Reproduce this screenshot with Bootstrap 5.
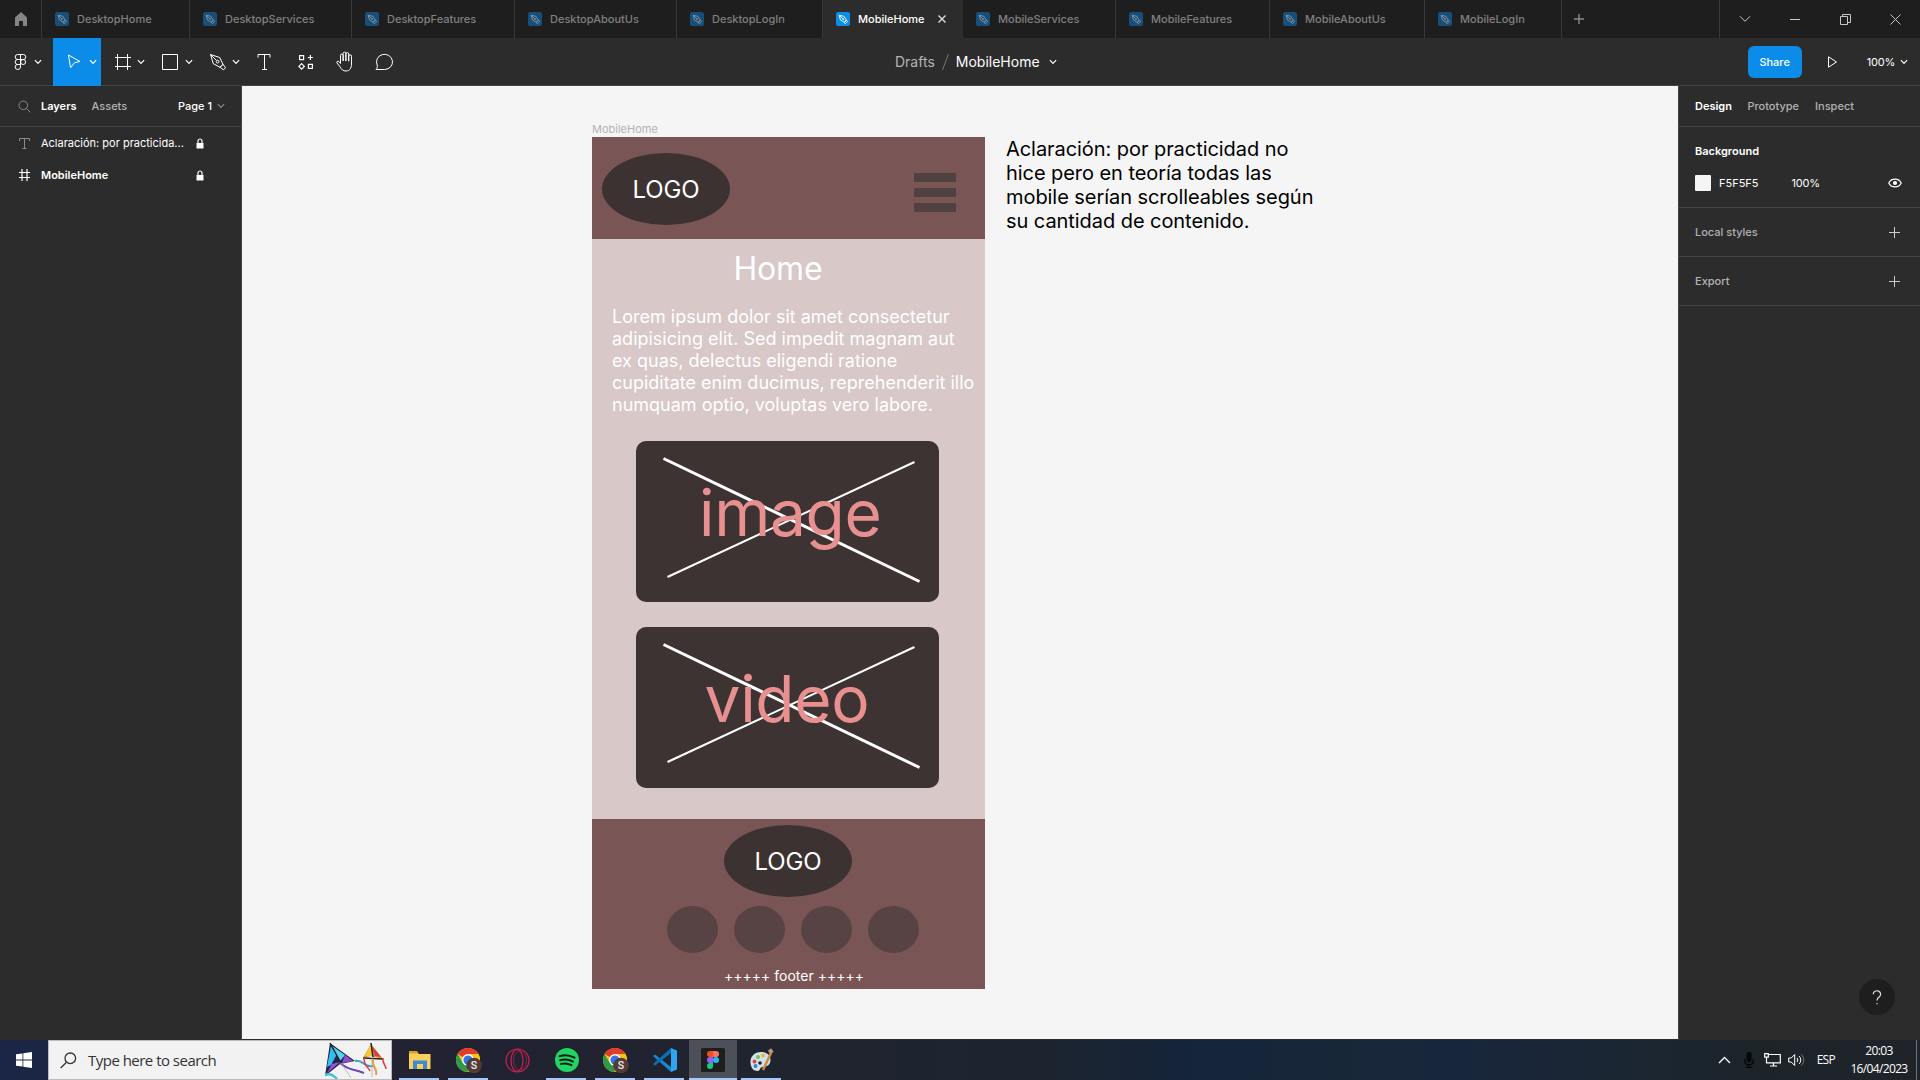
<!DOCTYPE html>
<html lang="es">
<head>
<meta charset="utf-8">
<meta name="viewport" content="width=device-width, initial-scale=1">
<title>MobileHome</title>
<link href="https://cdn.jsdelivr.net/npm/bootstrap@5.3.0/dist/css/bootstrap.min.css" rel="stylesheet">
<style>
:root{--panel:#2c2c2c;--line:#444;--dim:#b3b3b3;--accent:#0c8ce9}
body{width:1920px;height:1080px;overflow:hidden;font-family:Inter,"Liberation Sans",sans-serif;font-size:11px;line-height:16px;color:#fff;background:var(--panel)}
svg{display:block;flex:none;fill:none;stroke:currentColor}
.medium{font-weight:500}
.tabbar{height:38px;background:#1e1e1e;font-weight:500;color:#808080}
.tabbar>*{border-right:1px solid #383838}
.tabbar>.edge{border-right:0}
.homebtn{width:42px}
.filetab{gap:8px;padding-left:13px}
.filetab.on{background:var(--panel);color:#fff;border-right-color:var(--panel)}
.filetab .ico{width:14px;height:14px;border-radius:2px;background:#174f7a;color:#8694a0}
.filetab.on .ico{background:var(--accent);color:#fff}
.w148{width:148px}.w162{width:162px}.w163{width:163px}.w146{width:146px}.w140{width:140px}.w154{width:154px}.w153{width:153px}.w155{width:155px}.w137{width:137px}
.winbtn{width:50px;color:#c8c8c8}
.toolbar{height:48px;border-bottom:1px solid var(--line)}
.tool{height:48px;width:48px}
.tool.on{background:var(--accent)}
.tool.t53{width:53px}.tool.t47{width:47px}.tool.t42{width:42px}.tool.t41{width:41px}.tool.t38{width:38px}.tool.t40{width:40px}
.filetitle{font-size:14px;line-height:20px;left:895px;top:14px}
.sharebtn{width:54px;height:32px;border-radius:6px;background:var(--accent);color:#fff;font-size:11px;font-weight:500;line-height:16px;border:0}
.workarea{height:954px}
.leftpane{width:242px;border-right:1px solid var(--line)}
.rightpane{width:242px;border-left:1px solid var(--line)}
.panehead{height:41px;border-bottom:1px solid var(--line)}
.layer{height:32px;padding-left:19px}
.layer .txt{width:155px;margin-left:11px}
.dimmed{color:var(--dim)}
.section{border-bottom:1px solid var(--line);padding:0 20px 0 16px}
.sec49{height:49px}
.sec81{height:81px;padding-top:16px}
.swatch{width:16px;height:16px;background:#f5f5f5;border-radius:1px}
.canvasarea{background:#f5f5f5;height:953px}
.framelabel{left:350px;top:35px;color:#b3b3b3}
.mock{left:350px;top:51px;width:393px;height:852px;background:#d8c8c8}
.mockhead{height:102px;background:#7a5555;padding:16px 29px 0 10px}
.oval{width:128px;height:72px;border-radius:50%;background:#3c3232;font-size:24px;line-height:29px;letter-spacing:-.15px}
.burger{gap:6px;margin-top:20px}
.burger i{width:42px;height:9px;background:#504141}
.mocktitle{font-size:32px;line-height:39px;margin:10px 0 0 141.5px;letter-spacing:-.2px}
.mocktext{font-size:18px;line-height:22px;margin:18px 0 0 20px;white-space:nowrap}
.media{width:303px;height:161px;border-radius:10px;background:#3d3332;margin:25px 0 0 44px}
.media svg{stroke:#fff}
.mediatxt{font-size:64px;line-height:77px;letter-spacing:-.3px;color:#e88f90;top:33px;left:63px}
.mediatxt.vid{left:68.500px}
.mockfoot{height:170px;background:#7a5555;bottom:0}
.mockfoot .oval{margin:6px 0 0 132px}
.dots{gap:16px;margin:9px 0 0 75px}
.dots i{width:51px;height:47px;border-radius:50%;background:#574343}
.foottxt{font-size:14px;line-height:17px;margin:14px 0 0 132px}
.note{left:764px;top:51px;font-size:20px;line-height:24px;letter-spacing:-.06px;color:#000;white-space:nowrap}
.helpbtn{width:36px;height:36px;right:25px;bottom:25px;background:#1e1e1e}
.taskbar{height:40px;background:linear-gradient(90deg,#1b2646 0,#222233 21%,#20242e 40%,#1c2430 55%,#14243a 62%,#182738 70%,#18263c 76%,#1b2633 84%,#1c2429 92%,#20242a 100%);font-family:"Open Sans","Noto Sans",sans-serif}
.startbtn{width:48px}
.searchbox{width:344px;background:#f2f2f2;border:1px solid #bbb;color:#333;font-size:15px;letter-spacing:-.52px}
.app{width:49px;height:40px}
.app.first{width:52px;padding-left:3px}
.app.run::after{content:"";position:absolute;left:4px;right:5px;bottom:0;height:2px;background:#a9c8f7}
.app.first::after{left:7px}
.app.cur{background:#4c5058;width:48px}
.app.cur::after{left:0;right:0}
.clock{font-size:12px;line-height:18px;letter-spacing:-.65px;width:70px}
.lang{font-size:12px;letter-spacing:-.7px}
</style>
<script src="https://cdn.jsdelivr.net/npm/bootstrap@5.3.0/dist/js/bootstrap.bundle.min.js"></script>
</head>
<body>
<svg width="0" height="0" class="position-absolute">
<defs>
<symbol id="nib" viewBox="0 0 14 14"><path d="M3.2 3.2 8 4.4l2.2 3.7-2.1 2.1-3.7-2.2zM3.2 3.2l3.6 3.6M8 10.6l2.600-2.500.9 1.600-1.900 1.900z" stroke-width=".9"/><circle cx="7" cy="7" r=".7" stroke-width=".8"/></symbol>
<symbol id="down" viewBox="0 0 8 6"><path d="M.9 1.2 4 4.3l3.1-3.1" stroke-width="1.2"/></symbol>
<symbol id="lock" viewBox="0 0 8 11"><path d="M2 5V3a2 2 0 0 1 4 0v2" stroke-width="1.2"/><path d="M.5 5h7v5.500h-7z" fill="currentColor" stroke="none"/></symbol>
<symbol id="chrome" viewBox="0 0 26 25">
<circle cx="12" cy="12" r="12" fill="#fbc116" stroke="none"/>
<path d="M12 12 1.6 6A12 12 0 0 1 22.4 6z" fill="#e33b2e" stroke="none"/><path d="M12 6h10.4A12 12 0 0 1 24 12h-9z" fill="#fbc116" stroke="none"/>
<path d="M1.6 6 6.8 15 12 17.5 11.6 24A12 12 0 0 1 1.6 6z" fill="#2c9a48" stroke="none"/>
<circle cx="12" cy="12" r="5.9" fill="#fff" stroke="none"/><circle cx="12" cy="12" r="4.6" fill="#3277e8" stroke="none"/>
<circle cx="18" cy="17.5" r="7.8" fill="#533c38" stroke="none"/>
<text x="18" y="21.3" text-anchor="middle" font-family="Roboto" font-size="10.5" font-weight="500" fill="#eee" stroke="none">S</text>
</symbol>
</defs>
</svg>

<header class="tabbar d-flex">
  <div class="homebtn d-flex align-items-center justify-content-center"><svg width="14" height="14" viewBox="0 0 14 14"><path d="M7 0 1 5.5V14h4V9h4v5h4V5.5z" fill="#858585" stroke="none"/></svg></div>
  <div class="filetab d-flex align-items-center w148"><span class="ico"><svg width="14" height="14"><use href="#nib"/></svg></span>DesktopHome</div>
  <div class="filetab d-flex align-items-center w162"><span class="ico"><svg width="14" height="14"><use href="#nib"/></svg></span>DesktopServices</div>
  <div class="filetab d-flex align-items-center w163"><span class="ico"><svg width="14" height="14"><use href="#nib"/></svg></span>DesktopFeatures</div>
  <div class="filetab d-flex align-items-center w162"><span class="ico"><svg width="14" height="14"><use href="#nib"/></svg></span>DesktopAboutUs</div>
  <div class="filetab d-flex align-items-center w146"><span class="ico"><svg width="14" height="14"><use href="#nib"/></svg></span>DesktopLogIn</div>
  <div class="filetab on d-flex align-items-center w140"><span class="ico"><svg width="14" height="14"><use href="#nib"/></svg></span>MobileHome<svg style="margin-left:5px" width="8" height="8" viewBox="0 0 8 8"><path d="m.5.5 7 7m0-7-7 7" stroke="#ddd" stroke-width="1.4"/></svg></div>
  <div class="filetab d-flex align-items-center w153"><span class="ico"><svg width="14" height="14"><use href="#nib"/></svg></span>MobileServices</div>
  <div class="filetab d-flex align-items-center w154"><span class="ico"><svg width="14" height="14"><use href="#nib"/></svg></span>MobileFeatures</div>
  <div class="filetab d-flex align-items-center w155"><span class="ico"><svg width="14" height="14"><use href="#nib"/></svg></span>MobileAboutUs</div>
  <div class="filetab d-flex align-items-center w137"><span class="ico"><svg width="14" height="14"><use href="#nib"/></svg></span>MobileLogIn</div>
  <div class="flex-grow-1 d-flex align-items-center ps-2 ms-1"><svg width="10" height="10" viewBox="0 0 10 10"><path d="M5 0v10M0 5h10" stroke="#8a8a8a" stroke-width="1.4"/></svg></div>
  <div class="winbtn edge d-flex align-items-center justify-content-center"><svg width="12" height="8" viewBox="0 0 12 8"><path d="m1 1.3 5 5 5-5"/></svg></div>
  <div class="winbtn edge d-flex align-items-center justify-content-center"><svg width="10" height="2" viewBox="0 0 10 2"><path d="M0 1.5h10"/></svg></div>
  <div class="winbtn edge d-flex align-items-center justify-content-center"><svg width="11" height="11" viewBox="0 0 11 11"><path d="M.5 2.5h7v8h-7zM2.5 2.5v-2h8v8h-3"/></svg></div>
  <div class="winbtn edge d-flex align-items-center justify-content-center"><svg width="11" height="11" viewBox="0 0 11 11"><path d="m.5.5 10 10m0-10-10 10"/></svg></div>
</header>

<nav class="toolbar d-flex align-items-center position-relative">
  <div class="tool t53 d-flex align-items-center" style="gap:7px;padding-left:14px"><svg width="13" height="18" viewBox="0 0 13 18"><path d="M3.7 1.5h2.8v5H3.7a2.500 2.500 0 0 1 0-5zM6.500 1.500h2.800a2.500 2.500 0 0 1 0 5H6.500zM3.700 6.500h2.800v5H3.700a2.500 2.500 0 0 1 0-5zM3.700 11.500h2.800V14a2.700 2.500 0 1 1-2.800-2.500z"/><circle cx="9.1" cy="9" r="2.500"/></svg><svg width="8" height="6"><use href="#down"/></svg></div>
  <div class="tool on d-flex align-items-center gap-2 ps-3"><svg width="14" height="17" viewBox="0 0 14 17" style="margin-left:-2px"><path d="M1.500 2 13 8.500 7.500 9.700 3.500 14.700z"/></svg><svg width="8" height="6"><use href="#down"/></svg></div>
  <div class="tool t47 d-flex align-items-center ps-2" style="gap:5px"><svg style="margin-left:5px" width="18" height="18" viewBox="0 0 18 18"><path d="M3.500 1v16M13.500 1v16M1 4.500h16M1 13.500h16"/></svg><svg width="8" height="6"><use href="#down"/></svg></div>
  <div class="tool d-flex align-items-center ps-2" style="gap:6px"><svg style="margin-left:5px" width="18" height="18" viewBox="0 0 18 18"><path d="M1.500 1.500h15v15h-15z"/></svg><svg width="8" height="6"><use href="#down"/></svg></div>
  <div class="tool t47 d-flex align-items-center ps-2" style="gap:5px"><svg style="margin-left:5px" width="18" height="18" viewBox="0 0 18 18"><path d="m1.500 1.500 9.200 3 3.300 6.800-3 3-6.700-3.600zM1.500 1.500l6 6M11 14.300l3-3 2.500 3.400-2 2.200z"/><circle cx="8.600" cy="8.600" r="1.400"/></svg><svg width="8" height="6"><use href="#down"/></svg></div>
  <div class="tool t42 d-flex align-items-center justify-content-center"><svg width="14" height="18" viewBox="0 0 14 18"><path d="M1 4.500v-3h12v3M7.500 1.500v15M5 16.500h5"/></svg></div>
  <div class="tool t41 d-flex align-items-center justify-content-center"><svg width="16" height="16" viewBox="0 0 16 16" stroke-width="1.2"><path d="M1.600 1.600h4v4h-4zM10.400 10.400h4v4h-4zM12.400 1v5M9.900 3.500h5M3.600 9.700l2.700 2.700-2.700 2.700L.9 12.400z"/></svg></div>
  <div class="tool t38 d-flex align-items-center justify-content-center"><svg width="20" height="21" viewBox="0 0 20 21"><path d="M5.500 12.500V4.300a1.300 1.300 0 0 1 2.600 0V10 2.500a1.400 1.400 0 0 1 2.800 0V10 3a1.400 1.400 0 0 1 2.800 0v7.200V5.200a1.400 1.400 0 0 1 2.800 0V13c0 4.500-2 7-5.500 7-3 0-4.500-1.500-6-4.200L2 12c-.8-1.600 1-2.500 2-1.300z"/></svg></div>
  <div class="tool t40 d-flex align-items-center justify-content-center"><svg width="19" height="18" viewBox="0 0 19 18"><path d="M1 16.500c1.500-1.500 1.500-3 1.200-4.500A8 7.600 0 1 1 9.700 16.500z"/></svg></div>
  <div class="filetitle position-absolute d-flex align-items-center"><span class="dimmed">Drafts</span><svg width="9" height="18" viewBox="0 0 9 18" style="margin:0 6px"><path d="M1.500 17 7.500 1" stroke="#777"/></svg><span>MobileHome</span><svg style="margin-left:9px" width="8" height="6"><use href="#down"/></svg></div>
  <div class="ms-auto d-flex align-items-center"><button class="btn sharebtn p-0">Share</button><svg style="margin-left:25px" width="12" height="14" viewBox="0 0 12 14"><path d="M1.500 1.800v10.400L9.500 7z"/></svg><span style="margin-left:28px;letter-spacing:-.2px">100%</span><svg style="margin:0 12px 0 5px" width="8" height="6"><use href="#down"/></svg></div>
</nav>

<main class="workarea d-flex">
  <aside class="leftpane flex-shrink-0">
    <div class="panehead d-flex align-items-center"><svg style="margin-left:18px" width="13" height="13" viewBox="0 0 13 13"><g stroke="#888"><circle cx="5.300" cy="5.300" r="4.300"/><path d="m8.400 8.400 4 4"/></g></svg><b class="fw-semibold" style="margin-left:10px">Layers</b><span class="dimmed medium" style="margin-left:15px">Assets</span><span class="ms-auto medium">Page 1</span><svg style="margin:0 16px 0 5px;color:#888" width="8" height="6"><use href="#down"/></svg></div>
    <div class="layer d-flex align-items-center"><svg width="11" height="11" viewBox="0 0 11 11"><path d="M.5 3V.5h10V3M5.500.5v10M3.500 10.500h4" stroke="#8c8c8c"/></svg><span class="txt">Aclaración: por practicida...</span><svg width="8" height="11"><use href="#lock"/></svg></div>
    <div class="layer d-flex align-items-center"><svg width="11" height="12" viewBox="0 0 11 12"><path d="M3 0v12M8 0v12M0 3.500h11M0 8.500h11" stroke-width="1.200"/></svg><b class="txt fw-semibold">MobileHome</b><svg width="8" height="11"><use href="#lock"/></svg></div>
  </aside>

  <section class="canvasarea flex-grow-1 position-relative">
    <div class="framelabel position-absolute">MobileHome</div>
    <article class="mock position-absolute">
      <div class="mockhead d-flex align-items-start justify-content-between"><div class="oval d-flex align-items-center justify-content-center">LOGO</div><div class="burger d-flex flex-column"><i></i><i></i><i></i></div></div>
      <div class="mocktitle">Home</div>
      <div class="mocktext">Lorem ipsum dolor sit amet consectetur<br>adipisicing elit. Sed impedit magnam aut<br>ex quas, delectus eligendi ratione<br>cupiditate enim ducimus, reprehenderit illo<br>numquam optio, voluptas vero labore.</div>
      <div class="media position-relative"><svg width="303" height="161"><path d="M27.500 17.500 283.500 140.500" stroke-width="3"/><path d="M278.500 21 31.500 136" stroke-width="2"/></svg><div class="mediatxt position-absolute">image</div></div>
      <div class="media position-relative"><svg width="303" height="161"><path d="M27.500 17.500 283.500 140.500" stroke-width="3"/><path d="M278.500 20 31.500 135" stroke-width="2"/></svg><div class="mediatxt vid position-absolute">video</div></div>
      <div class="mockfoot position-absolute w-100 d-flex flex-column"><div class="oval d-flex align-items-center justify-content-center">LOGO</div><div class="dots d-flex"><i></i><i></i><i></i><i></i></div><div class="foottxt">+++++ footer +++++</div></div>
    </article>
    <div class="note position-absolute">Aclaración: por practicidad no<br>hice pero en teoría todas las<br>mobile serían scrolleables según<br>su cantidad de contenido.</div>
  </section>

  <aside class="rightpane flex-shrink-0 position-relative">
    <div class="panehead d-flex align-items-center ps-3"><b class="fw-semibold">Design</b><span class="dimmed medium" style="margin-left:15.500px">Prototype</span><span class="dimmed medium" style="margin-left:16px">Inspect</span></div>
    <div class="section sec81"><b class="fw-semibold d-block">Background</b><div class="d-flex align-items-center mt-3"><span class="swatch"></span><span class="ms-2">F5F5F5</span><span style="margin-left:33px;letter-spacing:-.2px">100%</span><svg class="ms-auto" style="margin-right:-2px" width="14" height="10" viewBox="0 0 14 10"><path d="M.8 5C3-.2 11-.2 13.200 5 11 10.200 3 10.200.8 5z" stroke-width="1.200"/><circle cx="7" cy="5" r="2.100" fill="#fff" stroke="none"/></svg></div></div>
    <div class="section sec49 d-flex align-items-center justify-content-between dimmed medium">Local styles<svg width="11" height="11" viewBox="0 0 11 11"><path d="M5.500 0v11M0 5.500h11" stroke="#ccc"/></svg></div>
    <div class="section sec49 d-flex align-items-center justify-content-between dimmed medium">Export<svg width="11" height="11" viewBox="0 0 11 11"><path d="M5.500 0v11M0 5.500h11" stroke="#ccc"/></svg></div>
    <div class="helpbtn position-absolute rounded-circle d-flex align-items-center justify-content-center"><svg width="10" height="15" viewBox="0 0 10 15"><path d="M1.200 4.200a3.700 3.400 0 1 1 5.900 2.700C5.700 7.900 5 8.600 5 10.500M5 13v1.300" stroke="#e0e0e0" stroke-width="1.200"/></svg></div>
  </aside>
</main>

<footer class="taskbar d-flex align-items-center">
  <div class="startbtn d-flex align-items-center justify-content-center"><svg width="16" height="16" viewBox="0 0 16 16"><path d="M0 2.300 6.500 1.400v6.200H0zM7.300 1.300 16 0v7.600H7.300zM0 8.400h6.500v6.200L0 13.700zM7.300 8.400H16V16l-8.700-1.300z" fill="#fff" stroke="none"/></svg></div>
  <div class="searchbox h-100 d-flex align-items-center"><svg style="margin-left:11px" width="17" height="17" viewBox="0 0 17 17"><circle cx="10.300" cy="6.300" r="5.300" stroke-width="1.300"/><path d="M6.500 10.200.7 16" stroke-width="1.300"/></svg><span style="margin-left:11px">Type here to search</span>
    <svg class="ms-auto" style="margin-right:2px" width="66" height="38" viewBox="0 0 66 38"><g stroke="none">
      <path d="M7 2 32 20 17 23 2 35z" fill="#22264a"/><path d="M8 5 14 13 8 24 4 26z" fill="#35bdf0"/><path d="M9 5 22 14 17 20 13 13z" fill="#55d3ee"/><path d="M22 14 30 20 19 22z" fill="#8a4fd0"/><path d="m9 23 8-2-13 11z" fill="#9b55dc"/>
      <path d="M48 3 40 17l8-2 12 3z" fill="#e89420"/><path d="m48 3 1 12-7 0z" fill="#f5c83a"/><path d="m49 5 9 11-6-1z" fill="#d93a4a"/></g>
      <path d="M7 2 18 22M48 2l2 14M40 17l20 1" stroke="#222" stroke-width="1.500"/><path d="M17 22c9 8 12 5 24 10" stroke="#6d45ba" stroke-width="2"/><path d="M32 20c8-2 9 7 18 5" stroke="#35a6bf" stroke-width="2"/><path d="M2 34c5-2 8 0 12 4" stroke="#49c2d5" stroke-width="2.500"/><path d="M41 17c0 9 4 8 6 13" stroke="#e23b4e" stroke-width="1.500"/><path d="M50 18c-2 8 5 9 3 16" stroke="#ed9a42" stroke-width="2"/><path d="M60 17c-1 6 3 7 3 11" stroke="#df3648" stroke-width="1.500"/><path d="M18 22 28 37M49 16v20" stroke="#aaa" stroke-width=".7"/></svg>
  </div>
  <div class="app first run position-relative d-flex align-items-center justify-content-center"><svg width="22" height="19" viewBox="0 0 22 19"><g stroke="none"><path d="M0 1h8l2 2h11.500v15H0z" fill="#f7cf5c"/><path d="M0 0h8l1.500 2.500H0z" fill="#dca11e"/><path d="M4 9.500h14V18H4z" fill="#3d8bd4"/><path d="M8 13h6v5H8z" fill="#f7cf5c"/></g></svg></div>
  <div class="app run position-relative d-flex align-items-center justify-content-center"><svg width="26" height="25"><use href="#chrome"/></svg></div>
  <div class="app position-relative d-flex align-items-center justify-content-center"><svg width="25" height="25" viewBox="0 0 25 25"><circle cx="12.500" cy="12.500" r="11.500" stroke="#c9234f" stroke-width="1.200"/><ellipse cx="12" cy="12.500" rx="6" ry="11" stroke="#c9234f" stroke-width="1.200"/><ellipse cx="15" cy="12.500" rx="6.500" ry="9.500" stroke="#93203f"/></svg></div>
  <div class="app run position-relative d-flex align-items-center justify-content-center"><svg width="24" height="24" viewBox="0 0 24 24"><circle cx="12" cy="12" r="12" fill="#1fd564" stroke="none"/><path d="M4.500 8.200c5-1.500 10.500-1 15 1.500M5.200 12.200c4.300-1.200 9-.7 12.700 1.400M5.900 15.900c3.600-.9 7.300-.6 10.600 1.200" stroke="#151c18" stroke-width="2" stroke-linecap="round"/></svg></div>
  <div class="app run position-relative d-flex align-items-center justify-content-center"><svg width="26" height="25"><use href="#chrome"/></svg></div>
  <div class="app run position-relative d-flex align-items-center justify-content-center"><svg width="24" height="24" viewBox="0 0 24 24"><g stroke="none"><path d="m0 8 2-1.500L18 19v5z" fill="#1687cf"/><path d="m0 16 2 1.500L18 5V0z" fill="#0d6fb3"/><path d="m18 0 6 2.500v19L18 24z" fill="#2fa4ef"/></g></svg></div>
  <div class="app run cur position-relative d-flex align-items-center justify-content-center"><svg width="24" height="24" viewBox="0 0 24 24"><g stroke="none"><rect width="24" height="24" rx="1.500" fill="#1e1e1e"/><path d="M12 3H9a3 3 0 0 0 0 6h3z" fill="#f24e1e"/><path d="M12 3h3a3 3 0 0 1 0 6h-3z" fill="#ff7262"/><path d="M12 9H9a3 3 0 0 0 0 6h3z" fill="#a259ff"/><circle cx="15" cy="12" r="3" fill="#1abcfe"/><path d="M9 15h3v3a3 3 0 1 1-3-3z" fill="#0acf83"/></g></svg></div>
  <div class="app run position-relative d-flex align-items-center justify-content-center"><svg width="24" height="24" viewBox="0 0 24 24"><g stroke="none"><path d="M11 4C4 4 0 9 .5 15c.5 5 3 8 7 8 3 0 2-4 5-4 4 0 8-2 8-7 0-5-4-8-9.500-8z" fill="#cfe2ee"/><circle cx="8" cy="9" r="2" fill="#7cc04b"/><circle cx="13" cy="7.500" r="2" fill="#e8b93d"/><circle cx="4.500" cy="13.500" r="1.900" fill="#d8463e"/><circle cx="5.500" cy="18" r="1.900" fill="#3f79c9"/><circle cx="10" cy="15" r="1.800" fill="#222"/></g><path d="M21 5 13 22" stroke="#cf8b3b" stroke-width="2.500"/><path d="M19.500 1.500 22 5" stroke="#b89878" stroke-width="4"/></svg></div>
  <div class="ms-auto d-flex align-items-center h-100">
    <svg width="13" height="8" viewBox="0 0 13 8"><path d="m1 7 5.500-5.500L12 7" stroke-width="1.300"/></svg>
    <svg style="margin-left:13px" width="10" height="16" viewBox="0 0 10 16"><path d="M.8 7v2c0 5 8.400 5 8.400 0V7M5 13v2.500M1.500 15.300h7" stroke="#030507" stroke-width="1.300"/><rect x="2.500" y="0" width="5" height="10.500" rx="2.200" fill="#050709" stroke="none"/></svg>
    <svg style="margin-left:10px" width="17" height="14" viewBox="0 0 17 14"><path d="M5 1.500h11.300v8.300H2.500V6M9.500 10v3M6 13h7M.7.700h3.600v3.500H.7zM2.500 4v3" stroke-width="1.200"/></svg>
    <svg style="margin-left:7px" width="17" height="14" viewBox="0 0 17 14"><path d="M.7 5h2.500l3.500-3.500v11L3.200 9H.7zM9 5c1 1.300 1 2.700 0 4M11 3c2.300 2.300 2.300 5.700 0 8"/><path d="M13.300 1.300c3.300 3.600 3.300 7.800 0 11.400" stroke="#777"/></svg>
    <span class="lang" style="margin-left:12px">ESP</span>
    <div class="clock text-center" style="margin-left:9px">20:03<br>16/04/2023</div>
    <span class="h-100 border-start border-secondary" style="width:4px;margin-left:2px"></span>
  </div>
</footer>
</body>
</html>
